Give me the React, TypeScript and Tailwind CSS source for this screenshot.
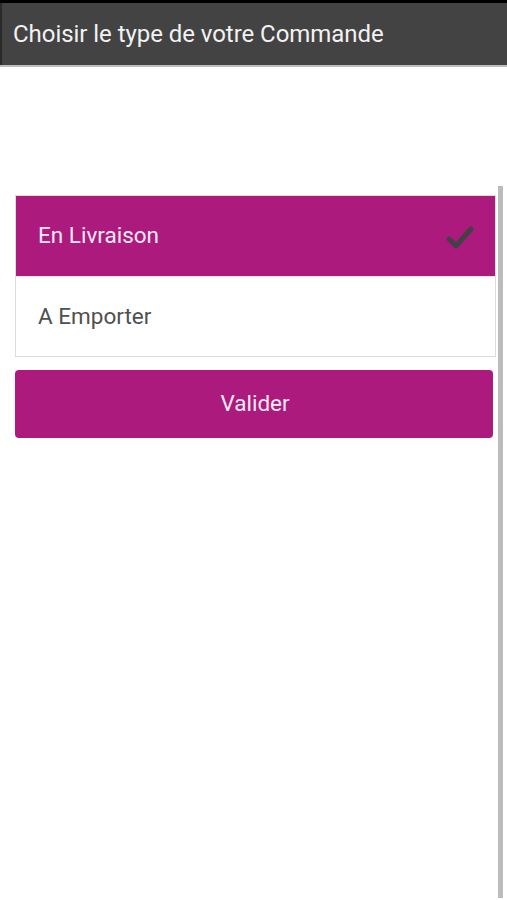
const options = [
  { label: "En Livraison", selected: true },
  { label: "A Emporter", selected: false },
];

export default function App() {
  return (
    <div className="min-h-[900px] w-full bg-white font-['Roboto',sans-serif]">
      <div className="h-[3px] bg-black" />
      <div className="flex h-[62px] items-center border-l-2 border-[#2a2a2a] bg-[#434343] pl-[11px]">
        <h1 className="text-[24px] tracking-[-0.05px] text-[#f2f2f2]">Choisir le type de votre Commande</h1>
      </div>
      <div className="h-[2px] bg-[#bdbdbd]" />

      <div className="flex">
        <div className="flex-1 pl-[15px] pr-[2px] pt-[128px]">
          <ul className="border border-[#dcdcdc]">
            {options.map((o) => (
              <li
                key={o.label}
                className={
                  o.selected
                    ? "flex h-[80px] items-center justify-between bg-[#ac1a7d] pl-[22px] pr-[21px] text-[22.5px] text-[#fbe9f4]"
                    : "flex h-[80px] items-center justify-between border-t border-[#e6e6e6] bg-white pl-[22px] pr-[21px] text-[22.5px] text-[#505050]"
                }
              >
                <span>{o.label}</span>
                {o.selected && (
                  <svg width="28" height="26" viewBox="0 0 28 26" className="mt-[4px]">
                    <path d="M3 14 L10 21 L25 4" fill="none" stroke="#454048" strokeWidth="5" strokeLinecap="round" strokeLinejoin="round" />
                  </svg>
                )}
              </li>
            ))}
          </ul>
          <button className="mt-[13px] flex h-[68px] w-[478px] items-center justify-center rounded-[4px] bg-[#ac1a7d] pl-[2px] text-[22.5px] text-[#fbe9f4]">
            Valider
          </button>
        </div>
        <div className="mt-[119px] mr-[4px] h-[712px] w-[5px] bg-[#bcbcbc]" />
      </div>
    </div>
  );
}
